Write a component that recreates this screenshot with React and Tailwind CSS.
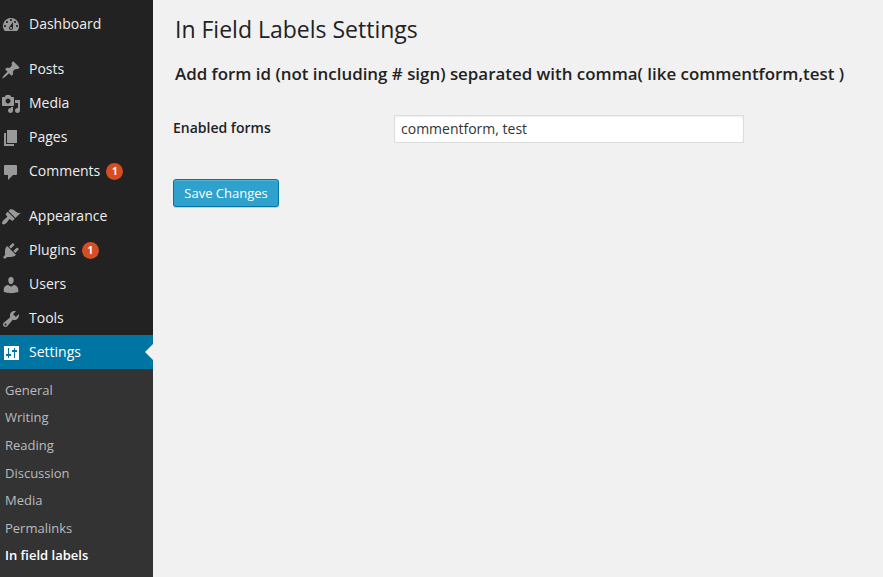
import React from "react";

const icons = {
  dashboard:
    "M3.76 16h12.48A7.998 7.998 0 0 0 10 3a7.998 7.998 0 0 0-6.24 13zM10 4c.55 0 1 .45 1 1s-.45 1-1 1-1-.45-1-1 .45-1 1-1zM6 6c.55 0 1 .45 1 1s-.45 1-1 1-1-.45-1-1 .45-1 1-1zm8 0c.55 0 1 .45 1 1s-.45 1-1 1-1-.45-1-1 .45-1 1-1zm-5.37 5.55L12 7v6c0 1.1-.9 2-2 2s-2-.9-2-2c0-.57.24-1.08.63-1.45zM4 10c.55 0 1 .45 1 1s-.45 1-1 1-1-.45-1-1 .45-1 1-1zm12 0c.55 0 1 .45 1 1s-.45 1-1 1-1-.45-1-1 .45-1 1-1zm-5 3c0-.55-.45-1-1-1s-1 .45-1 1 .45 1 1 1 1-.45 1-1z",
  posts:
    "M10.44 3.02l1.82-1.82 6.36 6.35-1.83 1.82c-1.05-.68-2.48-.57-3.41.36l-.75.75c-.92.93-1.04 2.35-.35 3.41l-1.83 1.82-2.41-2.41-2.8 2.79c-.42.42-3.38 2.71-3.8 2.29s1.86-3.39 2.28-3.81l2.79-2.79L4.1 9.36l1.83-1.82c1.05.69 2.48.57 3.4-.36l.75-.75c.93-.92 1.05-2.35.36-3.41z",
  media:
    "M13 11V4c0-.55-.45-1-1-1h-1.67L9 1H5L3.67 3H2c-.55 0-1 .45-1 1v7c0 .55.45 1 1 1h10c.55 0 1-.45 1-1zM7 4.5c1.38 0 2.5 1.12 2.5 2.5S8.38 9.5 7 9.5 4.5 8.38 4.5 7 5.62 4.5 7 4.5zM14 6h5v10.5c0 1.38-1.12 2.5-2.5 2.5S14 17.88 14 16.5s1.12-2.5 2.5-2.5c.17 0 .34.02.5.05V9h-3V6zm-4 8.05V13h2v3.5c0 1.38-1.12 2.5-2.5 2.5S7 17.88 7 16.5 8.12 14 9.5 14c.17 0 .34.02.5.05z",
  pages: "M6 15V2h10v13H6zm-1 1h8v2H3V5h2v11z",
  comments:
    "M4 3h11q1 0 1 1v8q0 1-1 1h-3l-5 5v-5H4q-1 0-1-1V4q0-1 1-1z",
  appearance:
    "M14.48 11.06L7.41 3.99l1.5-1.5c.5-.56 2.3-.47 3.51.32 1.21.8 1.43 1.28 2.91 2.1 1.18.64 2.45 1.26 4.45.85zm-.71.71L6.7 4.7 4.93 6.47c-.39.39-.39 1.02 0 1.41l1.06 1.06c.39.39.39 1.03 0 1.42-.6.6-1.43 1.11-2.21 1.69-.35.26-.7.53-1.01.84C1.43 14.23.4 16.08 1.4 17.07c.99 1 2.84-.03 4.18-1.36.31-.31.58-.66.85-1.02.57-.78 1.08-1.61 1.69-2.21.39-.39 1.02-.39 1.41 0l1.06 1.06c.39.39 1.02.39 1.41 0z",
  plugins:
    "M13.11 4.36L9.87 7.6 8 5.73l3.24-3.24c.35-.34 1.05-.2 1.56.32.52.51.66 1.21.31 1.55zm-8 1.77l.91-1.12 9.01 9.01-1.19.84c-.71.71-2.63 1.16-3.82 1.16H6.14L4.9 17.26c-.59.59-1.54.59-2.12 0-.59-.58-.59-1.53 0-2.12l1.24-1.24v-3.88c0-1.13.4-3.19 1.09-3.89zm7.26 3.97l3.24-3.24c.34-.35 1.04-.21 1.55.31.52.51.66 1.21.31 1.55l-3.24 3.25z",
  users:
    "M10 9.25c-2.27 0-2.73-3.44-2.73-3.44C7 4.02 7.82 2 9.97 2c2.16 0 2.98 2.02 2.71 3.81 0 0-.41 3.44-2.68 3.44zm0 2.57L12.72 10c2.39 0 4.52 2.33 4.52 4.53v2.49s-3.65 1.13-7.24 1.13c-3.65 0-7.24-1.13-7.24-1.13v-2.49c0-2.25 1.94-4.48 4.47-4.48z",
  tools:
    "M16.68 9.77c-1.34 1.34-3.3 1.67-4.95.99l-5.41 6.52c-.99.99-2.59.99-3.58 0s-.99-2.59 0-3.57l6.52-5.42c-.68-1.65-.35-3.61.99-4.95 1.28-1.28 3.12-1.62 4.72-1.06l-2.89 2.89 2.82 2.82 2.86-2.87c.53 1.58.18 3.39-1.08 4.65zM3.81 16.21c.4.39 1.04.39 1.43 0 .4-.4.4-1.04 0-1.43-.39-.4-1.03-.4-1.43 0-.39.39-.39 1.03 0 1.43z",
  settings:
    "M3 3h15v14H3zM7 5v6H5v2h2v2h1v-2h2v-2H8V5zM13 5v2h-2v2h2v6h1V9h2V7h-2V5z",
};

const groups = [
  [{ id: "dashboard", label: "Dashboard" }],
  [
    { id: "posts", label: "Posts" },
    { id: "media", label: "Media" },
    { id: "pages", label: "Pages" },
    { id: "comments", label: "Comments", count: 1 },
  ],
  [
    { id: "appearance", label: "Appearance" },
    { id: "plugins", label: "Plugins", count: 1 },
    { id: "users", label: "Users" },
    { id: "tools", label: "Tools" },
    { id: "settings", label: "Settings", active: true },
  ],
];

const submenu = ["General", "Writing", "Reading", "Discussion", "Media", "Permalinks", "In field labels"];

function MenuItem({ id, label, count, active }) {
  return (
    <li>
      <a
        className={
          active
            ? "relative flex h-[34px] items-center bg-[#0074a2] text-white"
            : "relative flex h-[34px] items-center text-[#eee]"
        }
      >
        <svg
          viewBox="0 0 20 20"
          className={active ? "mt-0.5 ml-px size-5 fill-white" : "mt-0.5 ml-px size-5 fill-[#999]"}
        >
          <path fillRule="evenodd" d={icons[id]} />
        </svg>
        <span className="ml-2 text-sm leading-[18px]">{label}</span>
        {count && (
          <span className="mt-px ml-1.5 flex size-[17px] items-center justify-center rounded-full bg-[#d54e21] text-[10px] leading-[17px] font-bold text-white">
            {count}
          </span>
        )}
        {active && (
          <span className="absolute top-[9px] right-0 border-y-8 border-r-8 border-y-transparent border-r-[#f1f1f1]" />
        )}
      </a>
    </li>
  );
}

export default function App() {
  return (
    <div className="flex h-[577px] w-[883px] overflow-hidden bg-[#f1f1f1] font-['Open_Sans',sans-serif] text-[#222]">
      <nav className="flex w-[153px] shrink-0 flex-col bg-[#222] pt-[7px]">
        <div className="flex flex-col gap-[11px]">
          {groups.map((items, i) => (
            <ul key={i}>
              {items.map((item) => (
                <MenuItem key={item.id} {...item} />
              ))}
            </ul>
          ))}
        </div>
        <ul className="grow bg-[#333] pt-[7.75px] pl-[5px] text-[13px] text-[#bbb]">
          {submenu.map((label) => (
            <li
              key={label}
              className="flex h-[27.6px] items-center last:font-semibold last:text-white"
            >
              {label}
            </li>
          ))}
        </ul>
      </nav>

      <main className="grow pt-[15px] pl-5">
        <h2 className="pl-0.5 text-[23px] leading-[29px]">In Field Labels Settings</h2>
        <h3 className="mt-[18px] pl-0.5 text-[16.9px] leading-6 font-semibold whitespace-nowrap">
          Add form id (not including # sign) separated with comma( like commentform,test )
        </h3>
        <div className="mt-[29px] flex">
          <label htmlFor="forms" className="w-[221px] pt-[3px] text-sm leading-5 font-semibold">
            Enabled forms
          </label>
          <input
            id="forms"
            type="text"
            defaultValue="commentform, test"
            className="h-7 w-[350px] border border-[#ddd] bg-white px-1.5 pb-0.5 text-sm text-[#333] shadow-[inset_0_1px_2px_rgba(0,0,0,0.07)] outline-none"
          />
        </div>
        <button className="mt-9 flex h-7 w-[106px] items-center justify-center rounded-[3px] border border-[#0074a2] bg-[#2ea2cc] pt-px text-[13px] text-white shadow-[inset_0_1px_0_rgba(120,200,230,0.5),0_1px_0_rgba(0,0,0,0.15)]">
          Save Changes
        </button>
      </main>
    </div>
  );
}
